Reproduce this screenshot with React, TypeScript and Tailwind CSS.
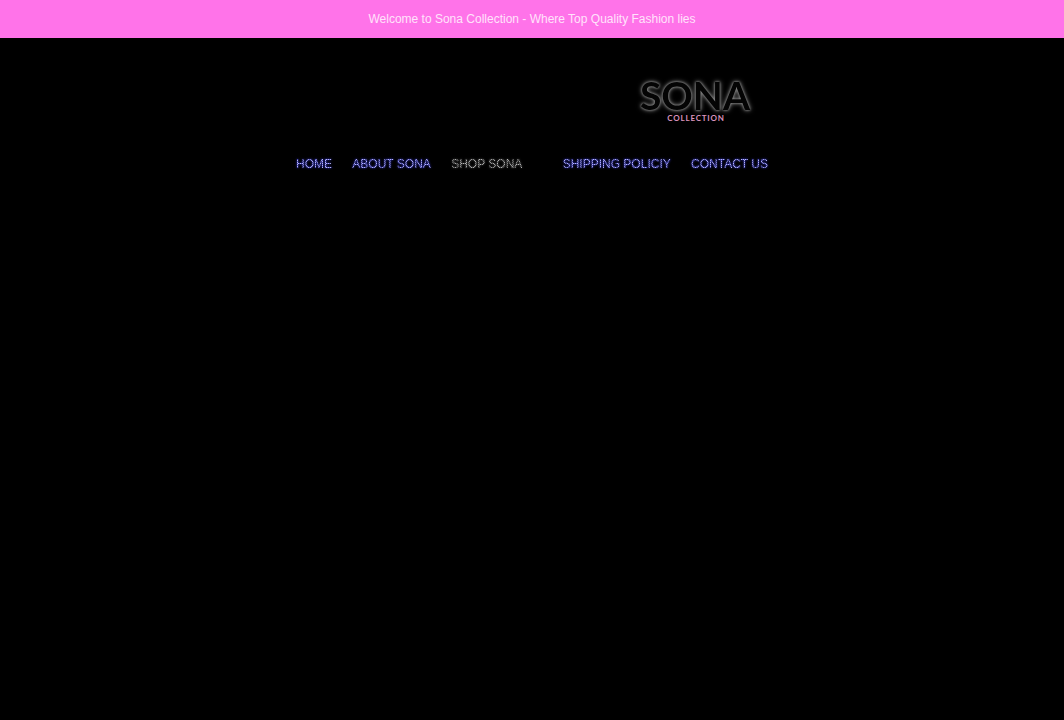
interface NavItem {
  label: string
  href: string
  active?: boolean
}

const navItems: NavItem[] = [
  { label: 'HOME', href: '#home' },
  { label: 'ABOUT SONA', href: '#about' },
  { label: 'SHOP SONA', href: '#shop', active: true },
  { label: 'SHIPPING POLICIY', href: '#shipping' },
  { label: 'CONTACT US', href: '#contact' },
]

function Logo() {
  return (
    <svg viewBox="0 0 128 56" className="h-14 w-32" role="img" aria-label="Sona Collection">
      <text
        x="63"
        y="38"
        fill="#040404"
        fontFamily="Lato, sans-serif"
        fontWeight="700"
        fontSize="39"
        textAnchor="middle"
        className="[filter:drop-shadow(0_0_1px_#909090)_drop-shadow(0_0_2px_#808080)]"
      >
        SONA
      </text>
      <text
        x="64"
        y="49"
        fill="#d993bd"
        fontFamily="Lato, sans-serif"
        fontWeight="700"
        fontSize="8"
        textAnchor="middle"
        className="tracking-widest"
      >
        COLLECTION
      </text>
    </svg>
  )
}

export default function App() {
  return (
    <div className="min-h-screen bg-black font-['Liberation_Sans',sans-serif]">
      {/* Announcement bar */}
      <div className="bg-[#ff73e9] px-4 py-2.5 text-center text-xs leading-[18px] text-[#ffe3fb]">
        Welcome to Sona Collection - Where Top Quality Fashion lies
      </div>

      {/* Header */}
      <header className="mx-auto flex max-w-[472px] flex-col pt-[34px]">
        <a href="#home" className="mr-2 self-end">
          <Logo />
        </a>

        {/* Dotted lettering: a 2px checker clipped to the text */}
        <nav className="mt-6 flex justify-between whitespace-nowrap text-xs leading-6">
          {navItems.map((item) => (
            <a
              key={item.label}
              href={item.href}
              className={
                item.active
                  ? 'mr-5 bg-[repeating-conic-gradient(#b4b4b4_0_25%,#505050_0_50%)] bg-[length:2px_2px] bg-clip-text text-transparent [filter:drop-shadow(0_0_1px_#444444)]'
                  : 'bg-[repeating-conic-gradient(#b8b8f4_0_25%,#5050c0_0_50%)] bg-[length:2px_2px] bg-clip-text text-transparent [filter:drop-shadow(0_0_1px_#2c2cc0)]'
              }
            >
              {item.label}
            </a>
          ))}
        </nav>
      </header>
    </div>
  )
}
